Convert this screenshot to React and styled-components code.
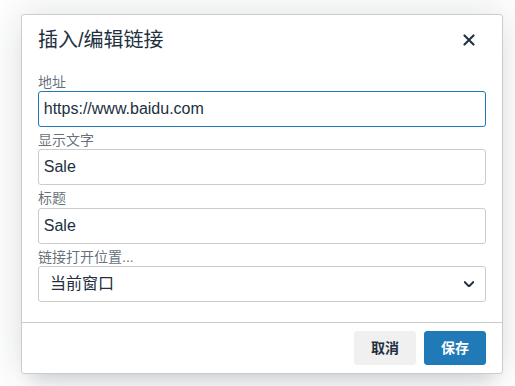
import React from "react";
import styled, { createGlobalStyle } from "styled-components";

const Global = createGlobalStyle`
  html, body { margin: 0; padding: 0; background: #fff; }
  body { font-family: "Liberation Sans", "Noto Sans CJK SC", sans-serif; color: #222f3e; }
  * { box-sizing: border-box; }
`;

const Page = styled.div`
  width: 515px;
  height: 386px;
  padding: 14px 0 0 21px;
`;

const Dialog = styled.div`
  width: 482px;
  background: #fff;
  border: 1px solid #ccc;
  border-radius: 3px;
  box-shadow: 0 16px 16px -10px rgba(34, 47, 62, 0.15), 0 0 40px 1px rgba(34, 47, 62, 0.15);
  display: flex;
  flex-direction: column;
`;

const Header = styled.div`
  display: flex;
  align-items: center;
  justify-content: space-between;
  padding: 8px 16px 0 16px;
`;

const Title = styled.h1`
  margin: 0;
  font-size: 20px;
  font-weight: 400;
  line-height: 1.3;
  color: #222f3e;
`;

const CloseButton = styled.button`
  width: 34px;
  height: 34px;
  border: 0;
  background: transparent;
  padding: 0;
  display: flex;
  align-items: center;
  justify-content: center;
  color: #222f3e;
  cursor: pointer;
`;

const Body = styled.div`
  padding: 16px;
  display: flex;
  flex-direction: column;
`;

const Group = styled.div`
  display: flex;
  flex-direction: column;
  margin-bottom: 4px;
`;

const Label = styled.label`
  font-size: 14px;
  line-height: 1.3;
  color: rgba(34, 47, 62, 0.7);
`;

const TextField = styled.input`
  height: 36px;
  width: 100%;
  font-family: inherit;
  font-size: 16px;
  line-height: 24px;
  padding: 5px 4.75px;
  color: #222f3e;
  background: #fff;
  border: 1px solid ${(p) => (p.$focused ? "#207ab7" : "#ccc")};
  border-radius: 3px;
  outline: none;
`;

const SelectWrap = styled.div`
  position: relative;
`;

const Select = styled.select`
  appearance: none;
  height: 36px;
  width: 100%;
  font-family: inherit;
  font-size: 16px;
  line-height: 24px;
  padding: 5px 30px 5px 11px;
  color: #222f3e;
  background: #fff;
  border: 1px solid #ccc;
  border-radius: 3px;
  outline: none;
`;

const Chevron = styled.svg`
  position: absolute;
  right: 12px;
  top: 15px;
  pointer-events: none;
`;

const Footer = styled.div`
  border-top: 1px solid #ccc;
  padding: 8px 16px;
  display: flex;
  justify-content: flex-end;
  gap: 8px;
`;

const Button = styled.button`
  font-family: inherit;
  font-size: 14px;
  font-weight: 700;
  line-height: 24px;
  padding: 4px 16px;
  border-radius: 3px;
  border: 1px solid ${(p) => (p.$primary ? "#207ab7" : "#f0f0f0")};
  background: ${(p) => (p.$primary ? "#207ab7" : "#f0f0f0")};
  color: ${(p) => (p.$primary ? "#fff" : "#222f3e")};
  cursor: pointer;
`;

export default function App() {
  return (
    <Page>
      <Global />
      <Dialog>
        <Header>
          <Title>插入/编辑链接</Title>
          <CloseButton aria-label="关闭">
            <svg width="24" height="24" viewBox="0 0 24 24">
              <path
                fill="currentColor"
                d="M17.3 8.2L13.4 12l3.9 3.8a1 1 0 01-1.5 1.5L12 13.4l-3.8 3.9a1 1 0 01-1.5-1.5l3.9-3.8-3.9-3.8a1 1 0 011.5-1.5l3.8 3.9 3.8-3.9a1 1 0 011.5 1.5z"
              />
            </svg>
          </CloseButton>
        </Header>
        <Body>
          <Group>
            <Label>地址</Label>
            <TextField $focused defaultValue="https://www.baidu.com" />
          </Group>
          <Group>
            <Label>显示文字</Label>
            <TextField defaultValue="Sale" />
          </Group>
          <Group>
            <Label>标题</Label>
            <TextField defaultValue="Sale" />
          </Group>
          <Group>
            <Label>链接打开位置...</Label>
            <SelectWrap>
              <Select defaultValue="current">
                <option value="current">当前窗口</option>
                <option value="new">新窗口</option>
              </Select>
              <Chevron width="10" height="6" viewBox="0 0 10 6">
                <path
                  fill="#222f3e"
                  d="M8.7.3L5 4 1.3.3A1 1 0 00-.1 1.7l4.4 4.4a1 1 0 001.4 0l4.4-4.4A1 1 0 008.7.3z"
                />
              </Chevron>
            </SelectWrap>
          </Group>
        </Body>
        <Footer>
          <Button>取消</Button>
          <Button $primary>保存</Button>
        </Footer>
      </Dialog>
    </Page>
  );
}
